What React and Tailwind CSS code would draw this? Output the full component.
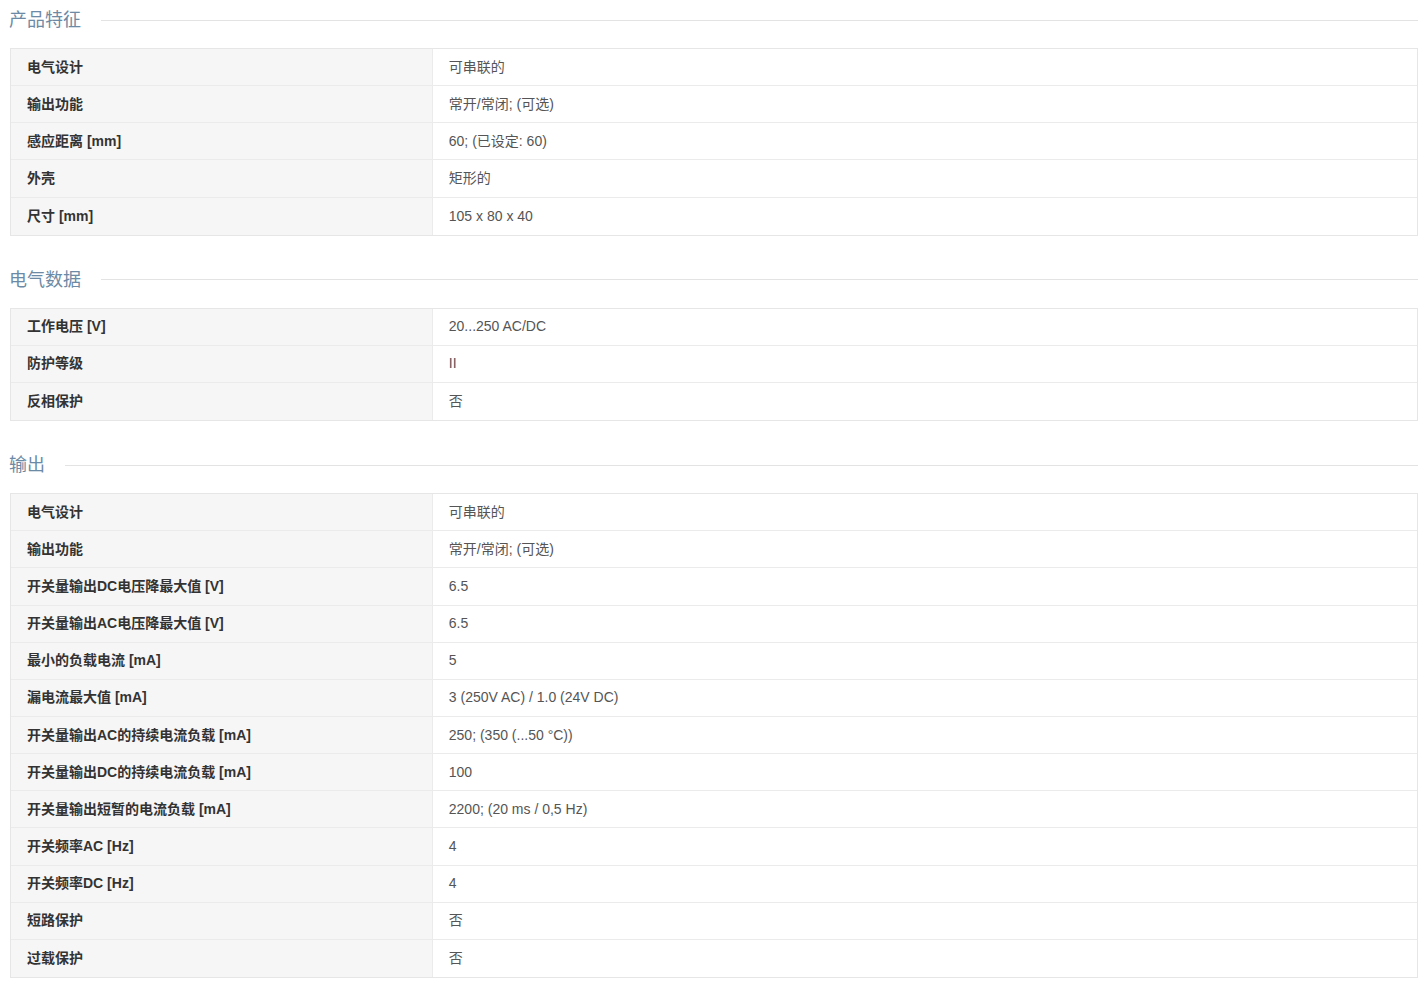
const sections = [
  {
    title: "产品特征",
    rows: [
      ["电气设计", "可串联的"],
      ["输出功能", "常开/常闭; (可选)"],
      ["感应距离 [mm]", "60; (已设定: 60)"],
      ["外壳", "矩形的"],
      ["尺寸 [mm]", "105 x 80 x 40"],
    ],
  },
  {
    title: "电气数据",
    rows: [
      ["工作电压 [V]", "20...250 AC/DC"],
      ["防护等级", "II"],
      ["反相保护", "否"],
    ],
  },
  {
    title: "输出",
    rows: [
      ["电气设计", "可串联的"],
      ["输出功能", "常开/常闭; (可选)"],
      ["开关量输出DC电压降最大值 [V]", "6.5"],
      ["开关量输出AC电压降最大值 [V]", "6.5"],
      ["最小的负载电流 [mA]", "5"],
      ["漏电流最大值 [mA]", "3 (250V AC) / 1.0 (24V DC)"],
      ["开关量输出AC的持续电流负载 [mA]", "250; (350 (...50 °C))"],
      ["开关量输出DC的持续电流负载 [mA]", "100"],
      ["开关量输出短暂的电流负载 [mA]", "2200; (20 ms / 0,5 Hz)"],
      ["开关频率AC [Hz]", "4"],
      ["开关频率DC [Hz]", "4"],
      ["短路保护", "否"],
      ["过载保护", "否"],
    ],
  },
];

const SectionTitle = ({ title }) => (
  <div className="flex items-center h-[28px]">
    <h3 className="text-[18px] leading-[28px] font-normal text-[#6c8aa5] whitespace-nowrap">{title}</h3>
    <div className="flex-1 ml-[20px] h-px bg-[#e3e3e3]" />
  </div>
);

const SpecTable = ({ rows }) => (
  <div className="border border-[#e6e6e6]">
    {rows.map(([label, value], i) => (
      <div
        key={i}
        className={`flex h-[37.15px] box-border ${i < rows.length - 1 ? "border-b border-[#ebebeb]" : ""}`}
      >
        <div className="w-[30%] bg-[#f6f6f6] border-r border-[#ebebeb] flex items-center px-[16px] text-[14px] font-bold text-[#333]">
          {label}
        </div>
        <div className="flex-1 bg-white flex items-center px-[16px] text-[14px] text-[#555]">{value}</div>
      </div>
    ))}
  </div>
);

export default function App() {
  return (
    <div
      className="bg-white min-h-screen pl-[10px] pr-[6px] pt-[6px]"
      style={{ fontFamily: '"Liberation Sans", Arial, "Noto Sans CJK SC", sans-serif' }}
    >
      {sections.map((s, i) => (
        <div key={i} className={i === 0 ? "" : "mt-[30px]"}>
          <div className="-ml-[1px]">
            <SectionTitle title={s.title} />
          </div>
          <div className="mt-[14px]">
            <SpecTable rows={s.rows} />
          </div>
        </div>
      ))}
    </div>
  );
}
